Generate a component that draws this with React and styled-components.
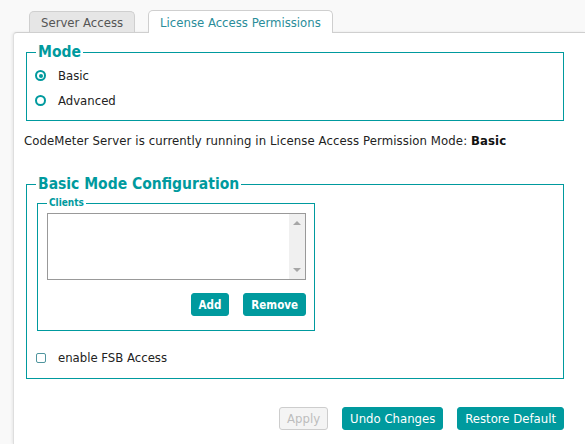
import React from 'react';
import styled, { createGlobalStyle } from 'styled-components';

const TEAL = '#009a9e';

const GlobalStyle = createGlobalStyle`
  html, body {
    margin: 0;
    padding: 0;
    background: #f9f9f9;
    font-family: "DejaVu Sans Condensed", "DejaVu Sans", sans-serif;
    font-size: 13px;
    color: #222;
    overflow: hidden;
  }
`;

const Page = styled.div`
  padding: 10px 0 0 13px;
  height: 444px;
  box-sizing: border-box;
  display: flex;
  flex-direction: column;
`;

const TabBar = styled.div`
  display: flex;
  align-items: flex-end;
  gap: 13px;
  padding-left: 16px;
`;

const Tab = styled.div`
  position: relative;
  z-index: 1;
  display: flex;
  align-items: center;
  box-sizing: border-box;
  height: ${(p) => (p.$active ? '23px' : '21px')};
  margin-bottom: ${(p) => (p.$active ? '-1px' : '0')};
  padding: ${(p) => (p.$active ? '0 11px' : '1px 11px 0')};
  border: 1px solid #cfcfcf;
  border-bottom: none;
  border-radius: 5px 5px 0 0;
  background: ${(p) => (p.$active ? '#fff' : '#e6e6e6')};
  color: ${(p) => (p.$active ? '#2a8d9a' : '#555')};
  font-size: 13px;
`;

const Panel = styled.div`
  flex: 1;
  background: #fff;
  border-top: 1px solid #cfcfcf;
  border-left: 1px solid #dedede;
  border-radius: 4px 0 0 0;
  box-shadow: -1px 0 3px rgba(0, 0, 0, 0.08);
  padding: 10px 21px 0 12px;
`;

const Fieldset = styled.fieldset`
  margin: ${(p) => p.$margin || '0'};
  width: ${(p) => p.$width || 'auto'};
  box-sizing: border-box;
  border: 1px solid ${TEAL};
  padding: ${(p) => p.$padding || '0 9px 8px'};
  min-width: 0;
`;

const Legend = styled.legend`
  padding: 0 2px;
  color: ${TEAL};
  font-weight: bold;
  font-size: ${(p) => (p.$small ? '10px' : '15.5px')};
  line-height: ${(p) => (p.$small ? '12px' : '18px')};
`;

const OptionRow = styled.label`
  display: flex;
  align-items: center;
  gap: 12px;
  height: 25px;
  margin: ${(p) => p.$margin || '0'};
  font-size: 13px;
`;

const Radio = styled.span`
  box-sizing: border-box;
  width: 11px;
  height: 11px;
  margin-left: -1px;
  border: 2px solid ${TEAL};
  border-radius: 50%;
  display: flex;
  align-items: center;
  justify-content: center;
  &::after {
    content: '';
    width: 4px;
    height: 4px;
    border-radius: 50%;
    background: ${(p) => (p.$checked ? TEAL : 'transparent')};
  }
`;

const Checkbox = styled.span`
  box-sizing: border-box;
  width: 10px;
  height: 10px;
  border: 1px solid #4f959e;
  border-radius: 2px;
`;

const StatusText = styled.p`
  margin: 12px 0 0 -2px;
  line-height: 16px;
  font-size: 13px;
  letter-spacing: 0.1px;
  b {
    color: #111;
  }
`;

const ListBox = styled.div`
  display: flex;
  width: 259px;
  height: 67px;
  box-sizing: border-box;
  border: 1px solid #999;
  background: #fff;
`;

const ListArea = styled.div`
  flex: 1;
`;

const ScrollTrack = styled.div`
  width: 16px;
  background: #f0f0f0;
  display: flex;
  flex-direction: column;
  justify-content: space-between;
  align-items: center;
  padding: 7px 0;
`;

const Arrow = styled.span`
  width: 0;
  height: 0;
  border-left: 4px solid transparent;
  border-right: 4px solid transparent;
  ${(p) => (p.$down ? 'border-top' : 'border-bottom')}: 4px solid #a6a6a6;
`;

const ButtonRow = styled.div`
  display: flex;
  justify-content: flex-end;
  gap: 14px;
  margin-top: ${(p) => p.$top || '0'};
  width: ${(p) => p.$width || 'auto'};
`;

const Button = styled.button`
  height: 23px;
  box-sizing: border-box;
  padding: 0 7px;
  border-radius: 3px;
  font-family: inherit;
  font-size: ${(p) => (p.$bold ? '11.5px' : '13px')};
  font-weight: ${(p) => (p.$bold ? 'bold' : 'normal')};
  color: #fff;
  background: ${TEAL};
  border: 1px solid ${TEAL};
  &:disabled {
    background: #f4f4f4;
    border-color: #cdcdcd;
    color: #bdbdbd;
  }
`;

export default function App() {
  return (
    <>
      <GlobalStyle />
      <Page>
        <TabBar>
          <Tab>Server Access</Tab>
          <Tab $active>License Access Permissions</Tab>
        </TabBar>
        <Panel>
          <Fieldset $padding="2px 9px 7px">
            <Legend>Mode</Legend>
            <OptionRow>
              <Radio $checked />
              Basic
            </OptionRow>
            <OptionRow>
              <Radio />
              Advanced
            </OptionRow>
          </Fieldset>

          <StatusText>
            CodeMeter Server is currently running in License Access Permission Mode: <b>Basic</b>
          </StatusText>

          <Fieldset $margin="26px 0 0" $padding="4px 9px 8px">
            <Legend>Basic Mode Configuration</Legend>
            <Fieldset $margin="0 0 0 1px" $width="278px" $padding="4px 9px 14px">
              <Legend $small>Clients</Legend>
              <ListBox>
                <ListArea />
                <ScrollTrack>
                  <Arrow />
                  <Arrow $down />
                </ScrollTrack>
              </ListBox>
              <ButtonRow $top="13px" $width="259px">
                <Button $bold>Add</Button>
                <Button $bold>Remove</Button>
              </ButtonRow>
            </Fieldset>
            <OptionRow $margin="14px 0 0">
              <Checkbox />
              enable FSB Access
            </OptionRow>
          </Fieldset>

          <ButtonRow $top="28px">
            <Button disabled>Apply</Button>
            <Button>Undo Changes</Button>
            <Button>Restore Default</Button>
          </ButtonRow>
        </Panel>
      </Page>
    </>
  );
}
